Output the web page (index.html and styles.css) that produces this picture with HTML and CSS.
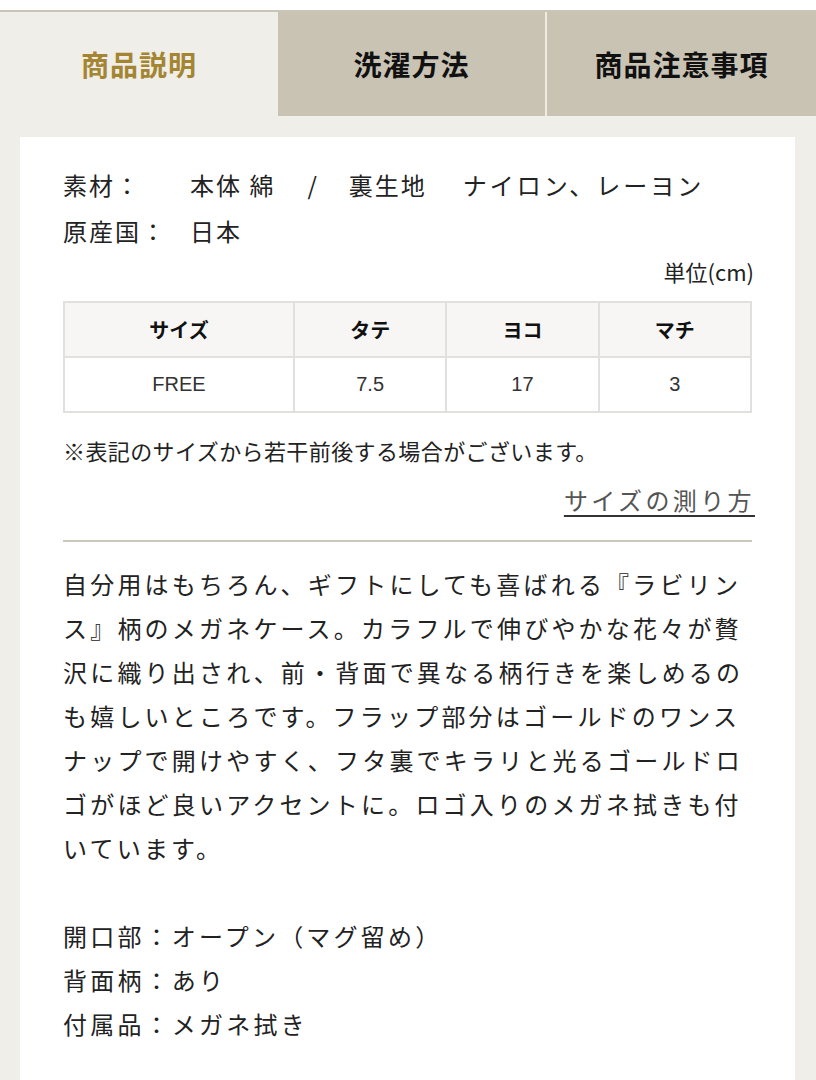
FILE: index.html
```html
<!DOCTYPE html>
<html lang="ja">
<head>
<meta charset="utf-8">
<title>商品説明</title>
<link rel="stylesheet" href="styles.css">
</head>
<body>
<div class="topbar"></div>
<nav class="tabs">
  <div class="tab active">商品説明</div>
  <div class="tab">洗濯方法</div>
  <div class="tab">商品注意事項</div>
</nav>
<main class="card">
  <div class="spec">
    <div class="spec-row"><span class="spec-label">素材：</span><span class="spec-value"><span>本体 綿</span><span class="sep">/</span><span>裏生地</span><span class="gap">ナイロン、レーヨン</span></span></div>
    <div class="spec-row"><span class="spec-label">原産国：</span><span class="spec-value">日本</span></div>
  </div>
  <div class="unit">単位(cm)</div>
  <table class="size-table">
    <thead>
      <tr><th class="c1">サイズ</th><th>タテ</th><th>ヨコ</th><th>マチ</th></tr>
    </thead>
    <tbody>
      <tr><td>FREE</td><td>7.5</td><td>17</td><td>3</td></tr>
    </tbody>
  </table>
  <p class="note">※表記のサイズから若干前後する場合がございます。</p>
  <div class="link-row"><a class="measure" href="#">サイズの測り方</a></div>
  <hr class="divider">
  <p class="desc">自分用はもちろん、ギフトにしても喜ばれる『ラビリンス』柄のメガネケース。カラフルで伸びやかな花々が贅沢に織り出され、前・背面で異なる柄行きを楽しめるのも嬉しいところです。フラップ部分はゴールドのワンスナップで開けやすく、フタ裏でキラリと光るゴールドロゴがほど良いアクセントに。ロゴ入りのメガネ拭きも付いています。<br><br>開口部：オープン（マグ留め）<br>背面柄：あり<br>付属品：メガネ拭き</p>
</main>
</body>
</html>
```
FILE: styles.css
```css
html, body {
  margin: 0;
  padding: 0;
}
body {
  background: #f0eee9;
  font-family: "Noto Sans CJK JP", "Noto Sans", sans-serif;
  color: #222;
  width: 816px;
  height: 1080px;
  overflow: hidden;
}
.topbar {
  height: 10px;
  background: #fff;
}
.tabs {
  display: grid;
  grid-template-columns: 278px 267px 271px;
  border-top: 2px solid #c9c4b7;
  height: 104px;
}
.tab {
  display: flex;
  align-items: center;
  justify-content: center;
  background: #c9c3b4;
  font-size: 28px;
  font-weight: 700;
  color: #111;
  letter-spacing: 1px;
}
.tab:nth-child(3) {
  border-left: 2px solid #eeebe3;
}
.tab.active {
  background: #f0eee9;
  color: #a38532;
}
.card {
  background: #fff;
  margin: 21px 21px 0 20px;
  padding: 25px 43px 40px 43px;
  min-height: 1000px;
}
.spec {
  font-size: 24px;
  line-height: 46px;
  letter-spacing: 2px;
}
.spec-row {
  display: flex;
}
.spec-label {
  width: 127px;
  flex: none;
}
.spec-value {
  display: flex;
}
.sep {
  margin: 0 32px 0 32px;
  letter-spacing: 0;
}
.gap {
  margin-left: 36px;
  letter-spacing: 3px;
}
.unit {
  text-align: right;
  font-size: 22px;
  line-height: 30px;
  margin-top: 2px;
  margin-right: -2px;
  color: #222;
}
.size-table {
  margin-top: 15px;
  width: 689px;
  border-collapse: collapse;
  table-layout: fixed;
  font-size: 20px;
}
.size-table th,
.size-table td {
  border: 2px solid #e2e0dd;
  height: 53px;
  padding: 0;
  text-align: center;
  vertical-align: middle;
}
.size-table th {
  background: #f7f6f4;
  font-weight: 700;
  color: #111;
}
.size-table th.c1 {
  width: 228px;
}
.size-table td {
  color: #333;
  font-family: "Liberation Sans", "Noto Sans CJK JP", sans-serif;
}
.note {
  margin: 21px 0 0 0;
  font-size: 22px;
  line-height: 32px;
  letter-spacing: 0.4px;
}
.link-row {
  text-align: right;
  margin-top: 16px;
  line-height: 36px;
}
.measure {
  font-size: 24px;
  color: #555;
  letter-spacing: 3.4px;
  margin-right: -3px;
  text-decoration: underline;
  text-decoration-thickness: 2px;
  text-underline-offset: 5px;
  text-decoration-color: #333;
}
.divider {
  border: 0;
  height: 2px;
  background: #cdc8bc;
  margin: 19px 0 0 0;
}
.desc {
  margin: 20px 0 0 0;
  font-size: 24px;
  line-height: 44px;
  letter-spacing: 3.2px;
}
```
